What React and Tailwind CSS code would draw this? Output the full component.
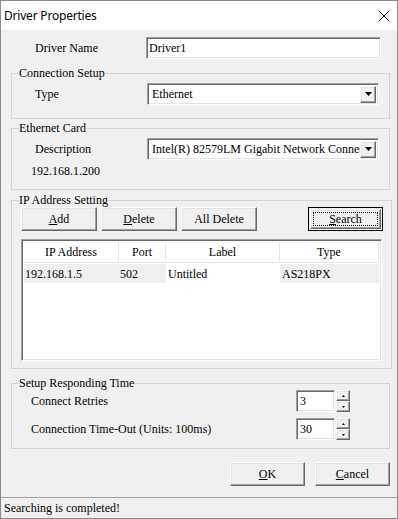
import React from 'react';

const sunken = "border border-t-[#a0a0a0] border-l-[#a0a0a0] border-b-white border-r-white shadow-[inset_1px_1px_0_#696969,inset_-1px_-1px_0_#e3e3e3]";
const raised = "border border-t-white border-l-white border-b-[#696969] border-r-[#696969] shadow-[inset_-1px_-1px_0_#a0a0a0,inset_1px_1px_0_#e3e3e3] bg-[#f0f0f0]";

const Group = ({ title, className, children }) => (
  <fieldset className={`border border-[#d5d5d5] ${className}`}>
    <legend className="ml-[7px] leading-[14px] px-0">{title}</legend>
    {children}
  </fieldset>
);

const Arrow = () => (
  <svg width="7" height="4" viewBox="0 0 7 4"><path d="M0 0h7L3.5 4z" fill="#000" /></svg>
);

const Combo = ({ value }) => (
  <div className={`w-[232px] h-[22px] bg-white flex items-center pl-[4px] pr-[2px] ${sunken}`}>
    <span className="flex-1 whitespace-nowrap overflow-hidden">{value}</span>
    <div className={`w-[16px] h-[17px] flex items-center justify-center shrink-0 ${raised}`}>
      <Arrow />
    </div>
  </div>
);

const Btn = ({ children, className = "", def = false }) => (
  <button className={`h-[24px] flex items-center justify-center ${def ? "border border-black bg-[#f0f0f0] p-[1px]" : raised} ${className}`}>
    {def ? (
      <span className={`w-full h-full flex items-center justify-center p-[2px] ${raised}`}>
        <span className="w-full h-full border border-dotted border-black flex items-center justify-center">{children}</span>
      </span>
    ) : children}
  </button>
);

const Spin = ({ value }) => (
  <div className="flex items-center">
    <div className={`w-[39px] h-[22px] bg-white pl-[3px] flex items-center ${sunken}`}>{value}</div>
    <div className="flex flex-col ml-[1px]">
      <div className={`w-[14px] h-[11px] flex items-center justify-center ${raised}`}>
        <svg width="3" height="2" viewBox="0 0 3 2"><path d="M1.5 0L3 2H0z" fill="#000" /></svg>
      </div>
      <div className={`w-[14px] h-[11px] flex items-center justify-center ${raised}`}>
        <svg width="3" height="2" viewBox="0 0 3 2"><path d="M0 0h3L1.5 2z" fill="#000" /></svg>
      </div>
    </div>
  </div>
);

const App = () => {
  return (
    <div className="w-[398px] h-[519px] bg-[#f0f0f0] border border-[#8a8a8a] flex flex-col text-[12px] text-black font-[Liberation_Serif,serif] overflow-hidden">
      {/* title bar */}
      <div className="h-[29px] bg-white flex items-center justify-between pl-[3px] pr-[6px] shrink-0">
        <span className="font-['Noto_Sans',sans-serif] text-[12px] tracking-[-0.2px]">Driver Properties</span>
        <svg width="12" height="12" viewBox="0 0 12 12" className="mr-[1px]">
          <path d="M0.5 0.5L11.5 11.5M11.5 0.5L0.5 11.5" stroke="#000" strokeWidth="1" />
        </svg>
      </div>

      <div className="flex-1 pl-[10px] pr-[7px] pt-[7px] flex flex-col">
        <div className="flex items-center pl-[24px]">
          <span className="w-[111px]">Driver Name</span>
          <div className={`w-[235px] h-[22px] bg-white pl-[2px] flex items-center ${sunken}`}>Driver1</div>
        </div>

        <Group title="Connection Setup" className="mt-[7px] pb-[13px]">
          <div className="flex items-center pl-[23px] pt-[3px]">
            <span className="w-[112px]">Type</span>
            <Combo value="Ethernet" />
          </div>
        </Group>

        <Group title="Ethernet Card" className="mt-[2px] pb-[10px]">
          <div className="flex items-center pl-[23px] pt-[3px]">
            <span className="w-[112px]">Description</span>
            <Combo value="Intel(R) 82579LM Gigabit Network Connection" />
          </div>
          <div className="pl-[19px] mt-[3px] leading-[16px]">192.168.1.200</div>
        </Group>

        <Group title="IP Address Setting" className="mt-[3px] pb-[7px]">
          <div className="flex pl-[9px] pr-[8px]">
            <Btn className="w-[76px]"><u>A</u>dd</Btn>
            <Btn className="w-[76px] ml-[4px]"><u>D</u>elete</Btn>
            <Btn className="w-[76px] ml-[4px]">All Delete</Btn>
            <Btn className="w-[75px] ml-auto" def><u>S</u>earch</Btn>
          </div>
          <div className={`mx-[9px] mt-[8px] h-[122px] bg-white flex flex-col p-[2px] ${sunken}`}>
            <div className="flex h-[21px] border-b border-[#e5e5e5] shrink-0">
              <div className="w-[95px] flex items-center justify-center border-r border-[#e5e5e5]">IP Address</div>
              <div className="w-[47px] flex items-center justify-center border-r border-[#e5e5e5]">Port</div>
              <div className="w-[114px] flex items-center justify-center border-r border-[#e5e5e5]">Label</div>
              <div className="w-[99px] flex items-center justify-center border-r border-[#e5e5e5]">Type</div>
            </div>
            <div className="flex h-[19px] mt-[1px]">
              <div className="w-[95px] pl-[1px] bg-[#efefef] flex items-center">192.168.1.5</div>
              <div className="w-[47px] pl-[1px] bg-[#efefef] flex items-center">502</div>
              <div className="w-[114px] pl-[2px] bg-white flex items-center">Untitled</div>
              <div className="w-[99px] pl-[2px] bg-[#efefef] flex items-center">AS218PX</div>
            </div>
          </div>
        </Group>

        <Group title="Setup Responding Time" className="mt-[7px] pb-[8px]">
          <div className="flex items-center pl-[19px] pr-[39px]">
            <span className="flex-1">Connect Retries</span>
            <Spin value="3" />
          </div>
          <div className="flex items-center pl-[19px] pr-[39px] mt-[6px]">
            <span className="flex-1">Connection Time-Out (Units: 100ms)</span>
            <Spin value="30" />
          </div>
        </Group>

        <div className="flex justify-end mt-[13px]">
          <Btn className="w-[75px]"><u>O</u>K</Btn>
          <Btn className="w-[75px] ml-[10px]"><u>C</u>ancel</Btn>
        </div>
      </div>

      <div className="h-[21px] border-t border-[#a0a0a0] flex items-center pl-[3px] shrink-0">
        Searching is completed!
      </div>
    </div>
  );
};

export default App;
